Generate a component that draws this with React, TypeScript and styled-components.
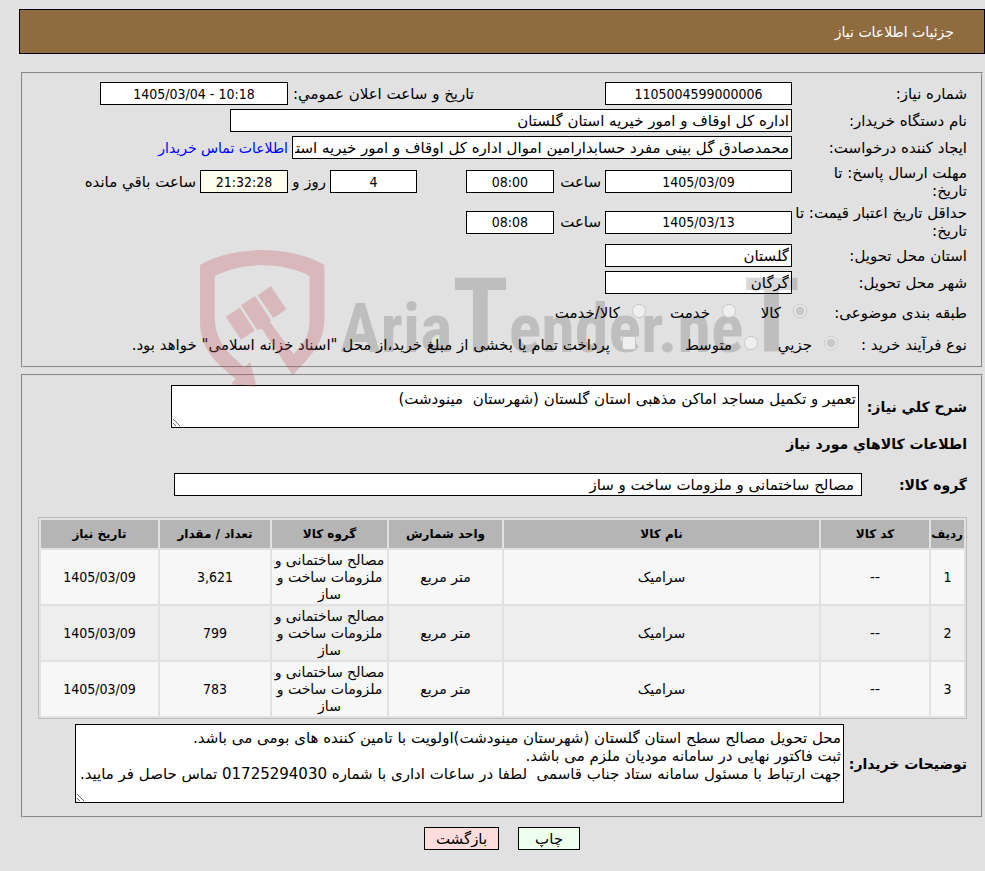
import React from "react";
import styled, { createGlobalStyle, css } from "styled-components";

const GlobalStyle = createGlobalStyle`
  *, *::before, *::after { box-sizing: border-box; }
  body {
    margin: 0;
    background: #e1e1e1;
    color: #000;
    font: 15px/18px "DejaVu Sans", sans-serif;
  }
  input, textarea, button { font: inherit; color: inherit; }
`;

const numeric = css`
  font-family: "DejaVu Sans Condensed", "DejaVu Sans", sans-serif;
  font-size: 14px;
`;

const Page = styled.main`
  padding: 9px 0 20px 19px;
`;

const TitleBar = styled.header`
  display: flex;
  align-items: center;
  height: 45px;
  padding: 0 30px;
  border: 1px solid #000;
  background: #8f6c40;
  color: #fff;
`;

const Title = styled.h1`
  margin: 0;
  font-size: 14px;
  font-weight: normal;
`;

const Panel = styled.fieldset<{ $bottom?: number }>`
  position: relative;
  min-width: 0;
  margin: 0 2px 6px;
  padding: 8px 14px ${(p) => p.$bottom ?? 8}px 15px;
  border: 2px groove #dcdcdc;
`;

const FirstPanel = styled(Panel)`
  margin-top: 18px;
`;

const Row = styled.div<{ $height?: number; $top?: number }>`
  display: flex;
  align-items: center;
  min-height: ${(p) => p.$height ?? 23}px;
  margin-top: ${(p) => p.$top ?? 4}px;
`;

const labelStyle = css<{ $width?: number; $bold?: boolean }>`
  flex: none;
  width: ${(p) => p.$width ?? 175}px;
  font-size: ${(p) => (p.$bold ? 14 : 15)}px;
  font-weight: ${(p) => (p.$bold ? "bold" : "normal")};
  white-space: nowrap;
`;

const Label = styled.label<{ $width?: number; $bold?: boolean }>`
  ${labelStyle}
`;

const GroupLabel = styled.span<{ $width?: number; $bold?: boolean }>`
  ${labelStyle}
`;

const Caption = styled.label<{ $width?: number; $before?: number }>`
  flex: none;
  width: ${(p) => (p.$width ? `${p.$width}px` : "auto")};
  margin-inline-start: ${(p) => p.$before ?? 0}px;
  padding-inline-start: 4px;
  white-space: nowrap;
`;

const TextBox = styled.input<{ $width?: number; $before?: number; $tint?: string }>`
  flex: none;
  width: ${(p) => p.$width ?? 187}px;
  height: 23px;
  margin-inline-start: ${(p) => p.$before ?? 0}px;
  padding: 0 2px;
  border: 1px solid #000;
  border-radius: 0;
  background: ${(p) => p.$tint ?? "#fff"};
`;

const NumberBox = styled(TextBox)`
  ${numeric}
  text-align: center;
`;

const GroupBox = styled(TextBox)`
  flex: 1;
  min-width: 0;
  margin-inline-end: 136px;
  padding: 0 7px;
`;

const TextArea = styled.textarea<{ $height: number; $after: number }>`
  flex: 1;
  min-width: 0;
  height: ${(p) => p.$height}px;
  margin-inline-end: ${(p) => p.$after}px;
  padding: 4px 2px;
  border: 1px solid #000;
  border-radius: 0;
  background: #fff;
  overflow: hidden;
`;

const ContactLink = styled.a`
  padding-inline-start: 4px;
  color: #0000ff;
  font-size: 14px;
  text-decoration: none;
  white-space: nowrap;
`;

const Choice = styled.label<{ $width?: number }>`
  display: flex;
  flex: none;
  align-items: center;
  gap: 12px;
  width: ${(p) => (p.$width ? `${p.$width}px` : "auto")};
  white-space: nowrap;
`;

const ChoiceInput = styled.input`
  position: relative;
  z-index: 2;
  flex: none;
  width: 14px;
  height: 14px;
  margin: 0 0 5px;
  appearance: none;
  border: 1px solid #c8c8c8;
  border-radius: ${(p) => (p.type === "radio" ? "50%" : "2px")};
  background: #efefef;

  &:checked {
    background: radial-gradient(circle, #c8c8c8 0 4px, #efefef 5px);
  }
`;

const SectionTitle = styled.h2`
  margin: 7px 0 0;
  font-size: 14px;
  line-height: 18px;
`;

const Goods = styled.table`
  width: 100%;
  margin: 21px 0 0;
  table-layout: fixed;
  border: 1px solid #bdbdbd;
  border-collapse: separate;
  border-spacing: 2px;
  font-size: 14px;
  line-height: 17px;
  text-align: center;

  th, td { padding: 1px; }
  th { height: 28px; background: #b5b5b5; font-size: 12px; white-space: nowrap; }
  td { height: 54px; background: #f7f7f7; }
  tbody tr:nth-child(even) td { background: #eeeeee; }
`;

const NumberCell = styled.td`
  ${numeric}
`;

const Col = styled.col<{ $width?: number }>`
  width: ${(p) => (p.$width ? `${p.$width}px` : "auto")};
`;

const Actions = styled.div`
  display: flex;
  justify-content: center;
  gap: 19px;
  margin-top: 9px;
`;

const ActionButton = styled.button<{ $width: number; $tint: string }>`
  width: ${(p) => p.$width}px;
  height: 23px;
  padding: 0;
  border: 1px solid #000;
  border-radius: 0;
  background: ${(p) => p.$tint};
`;

const Watermark = styled.svg`
  position: absolute;
  left: 177px;
  top: 176px;
  z-index: 1;
  pointer-events: none;
  overflow: visible;
`;

const goods = [
  { id: 1, amount: "3,621" },
  { id: 2, amount: "799" },
  { id: 3, amount: "783" },
];

const comments = [
  "محل تحویل مصالح سطح استان گلستان (شهرستان مینودشت)اولویت با تامین کننده های بومی می باشد.",
  "ثبت فاکتور نهایی در سامانه مودیان ملزم می باشد.",
  "جهت ارتباط با مسئول سامانه ستاد جناب قاسمی  لطفا در ساعات اداری با شماره 01725294030 تماس حاصل فر مایید.",
].join("\n");

function AriaTenderMark() {
  return (
    <Watermark width="600" height="138" viewBox="0 0 600 138" direction="ltr" aria-hidden="true">
      <g transform="scale(0.3333) translate(-60 -30)" fill="#c1505a" opacity="0.28">
        <path d="M60 75C165 15 330 15 433 75V240C431 310 395 345 338 406L246 266L232 270L183 196L225 168L272 240L270 246L341 343C375 304 389 290 389 235V108C310 65 185 65 104 108V235C108 310 145 339 194 383L210 365L230 441L152 433L168 417C94 360 60 318 60 240Z" />
        <path d="M136 230L180 202L225 272L183 300Z" stroke="#e1e1e1" strokeWidth="2" />
        <path d="M232 166L273 137L320 208L280 235Z" stroke="#e1e1e1" strokeWidth="2" />
      </g>
      <text
        x="140"
        y="102"
        fill="#000"
        opacity="0.15"
        fontFamily="'Liberation Sans Narrow', 'Roboto Condensed', 'Open Sans Condensed', 'Noto Sans ExtraCondensed', 'Noto Sans Condensed', 'DejaVu Sans Condensed', sans-serif"
        fontWeight="bold"
        fontSize="68"
      >
        Aria<tspan fontSize="104">T</tspan>ender.ne<tspan fontSize="104">T</tspan>
      </text>
    </Watermark>
  );
}

export default function App() {
  return (
    <Page dir="rtl" lang="fa">
      <GlobalStyle />
      <TitleBar>
        <Title>جزئیات اطلاعات نیاز</Title>
      </TitleBar>

      <FirstPanel>
        <AriaTenderMark />
        <Row $top={0}>
          <Label htmlFor="number">شماره نیاز:</Label>
          <NumberBox id="number" readOnly defaultValue="1105004599000006" />
          <Caption htmlFor="announced" $before={127} $width={190}>تاریخ و ساعت اعلان عمومي:</Caption>
          <NumberBox id="announced" $width={188} dir="ltr" readOnly defaultValue="1405/03/04 - 10:18" />
        </Row>
        <Row>
          <Label htmlFor="buyer">نام دستگاه خریدار:</Label>
          <TextBox id="buyer" $width={562} readOnly defaultValue="اداره کل اوقاف و امور خیریه استان گلستان" />
        </Row>
        <Row>
          <Label htmlFor="creator">ایجاد کننده درخواست:</Label>
          <TextBox
            id="creator"
            $width={500}
            readOnly
            defaultValue="محمدصادق گل بینی مفرد حسابدارامین اموال اداره کل اوقاف و امور خیریه استان گلستان"
          />
          <ContactLink href="#contact">اطلاعات تماس خریدار</ContactLink>
        </Row>
        <Row $height={37}>
          <Label htmlFor="deadline">مهلت ارسال پاسخ: تا<br />تاریخ:</Label>
          <NumberBox id="deadline" readOnly defaultValue="1405/03/09" />
          <Caption htmlFor="deadline-time" $width={51}>ساعت</Caption>
          <NumberBox id="deadline-time" $width={88} readOnly defaultValue="08:00" />
          <NumberBox id="days" $width={87} $before={49} readOnly defaultValue="4" />
          <Caption htmlFor="days" $width={42}>روز و</Caption>
          <NumberBox id="remaining" $width={88} $tint="#fffff0" readOnly defaultValue="21:32:28" />
          <Caption htmlFor="remaining">ساعت باقي مانده</Caption>
        </Row>
        <Row $height={36}>
          <Label htmlFor="validity">حداقل تاریخ اعتبار قیمت: تا<br />تاریخ:</Label>
          <NumberBox id="validity" readOnly defaultValue="1405/03/13" />
          <Caption htmlFor="validity-time" $width={51}>ساعت</Caption>
          <NumberBox id="validity-time" $width={88} readOnly defaultValue="08:08" />
        </Row>
        <Row>
          <Label htmlFor="province">استان محل تحویل:</Label>
          <TextBox id="province" readOnly defaultValue="گلستان" />
        </Row>
        <Row>
          <Label htmlFor="city">شهر محل تحویل:</Label>
          <TextBox id="city" readOnly defaultValue="گرگان" />
        </Row>
        <Row $height={30}>
          <GroupLabel $width={160}>طبقه بندی موضوعی:</GroupLabel>
          <Choice $width={71}><ChoiceInput type="radio" name="category" disabled defaultChecked />کالا</Choice>
          <Choice $width={90}><ChoiceInput type="radio" name="category" disabled />خدمت</Choice>
          <Choice><ChoiceInput type="radio" name="category" disabled />کالا/خدمت</Choice>
        </Row>
        <Row $height={26}>
          <GroupLabel $width={129}>نوع فرآیند خرید :</GroupLabel>
          <Choice $width={80}><ChoiceInput type="radio" name="process" disabled defaultChecked />جزیي</Choice>
          <Choice $width={122}><ChoiceInput type="radio" name="process" disabled />متوسط</Choice>
          <Choice>
            <ChoiceInput type="checkbox" disabled />
            پرداخت تمام یا بخشی از مبلغ خرید،از محل "اسناد خزانه اسلامی" خواهد بود.
          </Choice>
        </Row>
      </FirstPanel>

      <Panel $bottom={13}>
        <Row $top={1}>
          <Label htmlFor="summary" $width={108} $bold>شرح کلي نیاز:</Label>
          <TextArea
            id="summary"
            $height={43}
            $after={133}
            readOnly
            defaultValue="تعمیر و تکمیل مساجد اماکن مذهبی استان گلستان (شهرستان  مینودشت)"
          />
        </Row>
        <SectionTitle>اطلاعات کالاهاي مورد نیاز</SectionTitle>
        <Row $top={20}>
          <Label htmlFor="group" $width={105} $bold>گروه کالا:</Label>
          <GroupBox id="group" readOnly defaultValue="مصالح ساختمانی و ملزومات ساخت و ساز" />
        </Row>
        <Goods>
          <colgroup>
            <Col $width={33} />
            <Col $width={108} />
            <Col />
            <Col $width={113} />
            <Col $width={115} />
            <Col $width={110} />
            <Col $width={117} />
          </colgroup>
          <thead>
            <tr>
              <th>ردیف</th>
              <th>کد کالا</th>
              <th>نام کالا</th>
              <th>واحد شمارش</th>
              <th>گروه کالا</th>
              <th>تعداد / مقدار</th>
              <th>تاریخ نیاز</th>
            </tr>
          </thead>
          <tbody>
            {goods.map((item) => (
              <tr key={item.id}>
                <NumberCell>{item.id}</NumberCell>
                <td>--</td>
                <td>سرامیک</td>
                <td>متر مربع</td>
                <td>مصالح ساختمانی و ملزومات ساخت و ساز</td>
                <NumberCell>{item.amount}</NumberCell>
                <NumberCell>1405/03/09</NumberCell>
              </tr>
            ))}
          </tbody>
        </Goods>
        <Row $top={5}>
          <Label htmlFor="comments" $width={123} $bold>توضیحات خریدار:</Label>
          <TextArea id="comments" $height={79} $after={37} readOnly defaultValue={comments} />
        </Row>
      </Panel>

      <Actions>
        <ActionButton type="button" $width={62} $tint="#eeffee">چاپ</ActionButton>
        <ActionButton type="button" $width={75} $tint="#ffdddd">بازگشت</ActionButton>
      </Actions>
    </Page>
  );
}
